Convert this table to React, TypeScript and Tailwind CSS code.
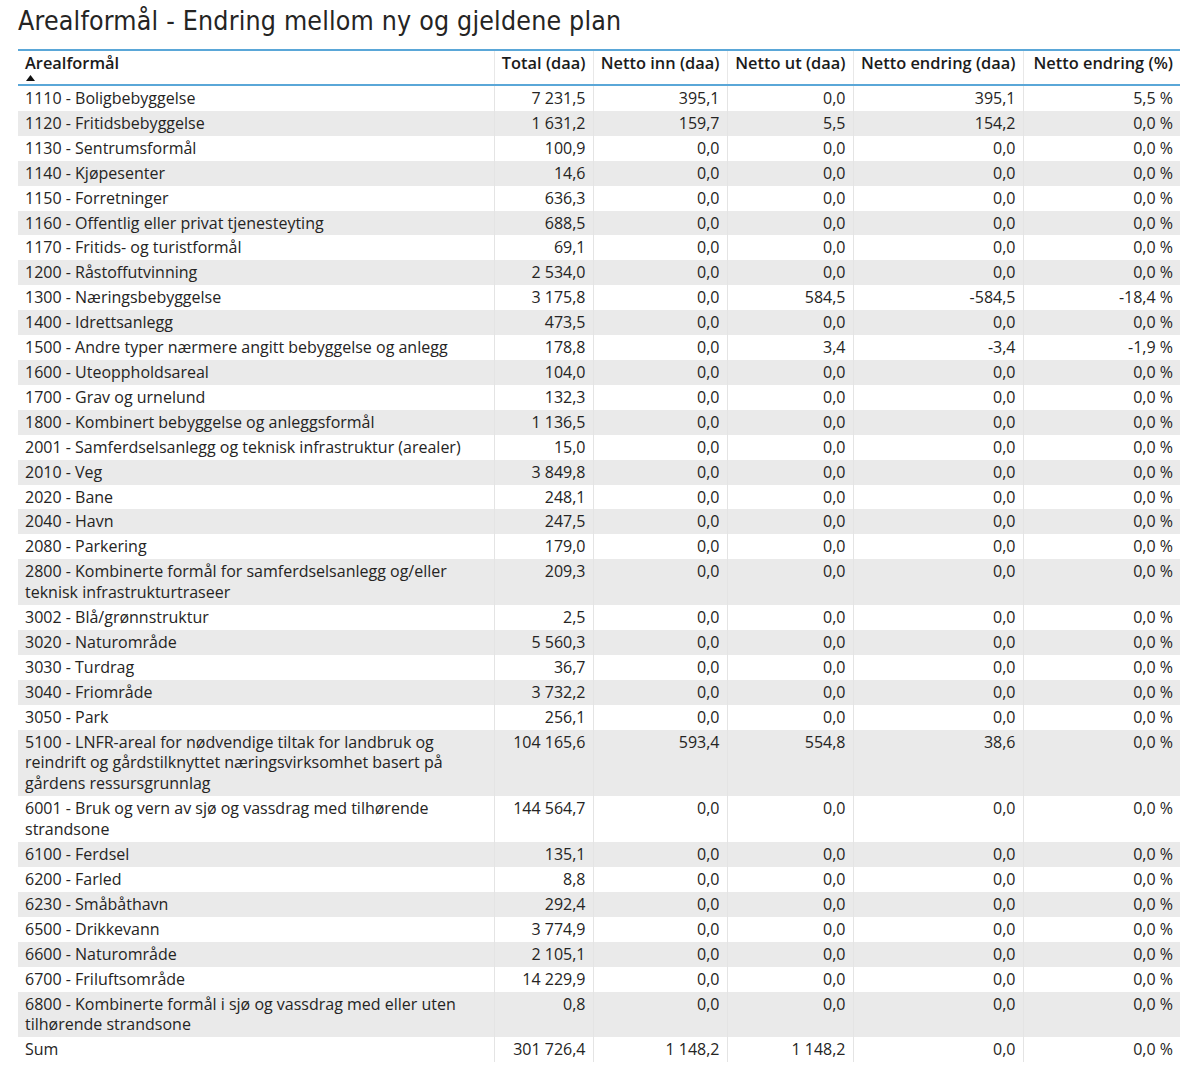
import React from 'react';

type Row = {
    name: string;
    total: string;
    inn: string;
    ut: string;
    endring: string;
    pct: string;
};

const rows: Row[] = [
    { name: '1110 - Boligbebyggelse', total: '7 231,5', inn: '395,1', ut: '0,0', endring: '395,1', pct: '5,5 %' },
    { name: '1120 - Fritidsbebyggelse', total: '1 631,2', inn: '159,7', ut: '5,5', endring: '154,2', pct: '0,0 %' },
    { name: '1130 - Sentrumsformål', total: '100,9', inn: '0,0', ut: '0,0', endring: '0,0', pct: '0,0 %' },
    { name: '1140 - Kjøpesenter', total: '14,6', inn: '0,0', ut: '0,0', endring: '0,0', pct: '0,0 %' },
    { name: '1150 - Forretninger', total: '636,3', inn: '0,0', ut: '0,0', endring: '0,0', pct: '0,0 %' },
    { name: '1160 - Offentlig eller privat tjenesteyting', total: '688,5', inn: '0,0', ut: '0,0', endring: '0,0', pct: '0,0 %' },
    { name: '1170 - Fritids- og turistformål', total: '69,1', inn: '0,0', ut: '0,0', endring: '0,0', pct: '0,0 %' },
    { name: '1200 - Råstoffutvinning', total: '2 534,0', inn: '0,0', ut: '0,0', endring: '0,0', pct: '0,0 %' },
    { name: '1300 - Næringsbebyggelse', total: '3 175,8', inn: '0,0', ut: '584,5', endring: '-584,5', pct: '-18,4 %' },
    { name: '1400 - Idrettsanlegg', total: '473,5', inn: '0,0', ut: '0,0', endring: '0,0', pct: '0,0 %' },
    { name: '1500 - Andre typer nærmere angitt bebyggelse og anlegg', total: '178,8', inn: '0,0', ut: '3,4', endring: '-3,4', pct: '-1,9 %' },
    { name: '1600 - Uteoppholdsareal', total: '104,0', inn: '0,0', ut: '0,0', endring: '0,0', pct: '0,0 %' },
    { name: '1700 - Grav og urnelund', total: '132,3', inn: '0,0', ut: '0,0', endring: '0,0', pct: '0,0 %' },
    { name: '1800 - Kombinert bebyggelse og anleggsformål', total: '1 136,5', inn: '0,0', ut: '0,0', endring: '0,0', pct: '0,0 %' },
    { name: '2001 - Samferdselsanlegg og teknisk infrastruktur (arealer)', total: '15,0', inn: '0,0', ut: '0,0', endring: '0,0', pct: '0,0 %' },
    { name: '2010 - Veg', total: '3 849,8', inn: '0,0', ut: '0,0', endring: '0,0', pct: '0,0 %' },
    { name: '2020 - Bane', total: '248,1', inn: '0,0', ut: '0,0', endring: '0,0', pct: '0,0 %' },
    { name: '2040 - Havn', total: '247,5', inn: '0,0', ut: '0,0', endring: '0,0', pct: '0,0 %' },
    { name: '2080 - Parkering', total: '179,0', inn: '0,0', ut: '0,0', endring: '0,0', pct: '0,0 %' },
    { name: '2800 - Kombinerte formål for samferdselsanlegg og/eller teknisk infrastrukturtraseer', total: '209,3', inn: '0,0', ut: '0,0', endring: '0,0', pct: '0,0 %' },
    { name: '3002 - Blå/grønnstruktur', total: '2,5', inn: '0,0', ut: '0,0', endring: '0,0', pct: '0,0 %' },
    { name: '3020 - Naturområde', total: '5 560,3', inn: '0,0', ut: '0,0', endring: '0,0', pct: '0,0 %' },
    { name: '3030 - Turdrag', total: '36,7', inn: '0,0', ut: '0,0', endring: '0,0', pct: '0,0 %' },
    { name: '3040 - Friområde', total: '3 732,2', inn: '0,0', ut: '0,0', endring: '0,0', pct: '0,0 %' },
    { name: '3050 - Park', total: '256,1', inn: '0,0', ut: '0,0', endring: '0,0', pct: '0,0 %' },
    { name: '5100 - LNFR-areal for nødvendige tiltak for landbruk og reindrift og gårdstilknyttet næringsvirksomhet basert på gårdens ressursgrunnlag', total: '104 165,6', inn: '593,4', ut: '554,8', endring: '38,6', pct: '0,0 %' },
    { name: '6001 - Bruk og vern av sjø og vassdrag med tilhørende strandsone', total: '144 564,7', inn: '0,0', ut: '0,0', endring: '0,0', pct: '0,0 %' },
    { name: '6100 - Ferdsel', total: '135,1', inn: '0,0', ut: '0,0', endring: '0,0', pct: '0,0 %' },
    { name: '6200 - Farled', total: '8,8', inn: '0,0', ut: '0,0', endring: '0,0', pct: '0,0 %' },
    { name: '6230 - Småbåthavn', total: '292,4', inn: '0,0', ut: '0,0', endring: '0,0', pct: '0,0 %' },
    { name: '6500 - Drikkevann', total: '3 774,9', inn: '0,0', ut: '0,0', endring: '0,0', pct: '0,0 %' },
    { name: '6600 - Naturområde', total: '2 105,1', inn: '0,0', ut: '0,0', endring: '0,0', pct: '0,0 %' },
    { name: '6700 - Friluftsområde', total: '14 229,9', inn: '0,0', ut: '0,0', endring: '0,0', pct: '0,0 %' },
    { name: '6800 - Kombinerte formål i sjø og vassdrag med eller uten tilhørende strandsone', total: '0,8', inn: '0,0', ut: '0,0', endring: '0,0', pct: '0,0 %' },
];

const sum: Row = { name: 'Sum', total: '301 726,4', inn: '1 148,2', ut: '1 148,2', endring: '0,0', pct: '0,0 %' };

const headers = ['Total (daa)', 'Netto inn (daa)', 'Netto ut (daa)', 'Netto endring (daa)', 'Netto endring (%)'];

function BodyRow({ row, striped }: { row: Row; striped: boolean }) {
    const cell = 'align-top py-[2px] px-[7px] leading-[20.9px] border-r border-[#e4e4e4]';
    return (
        <tr className={striped ? 'bg-[#eaeaea]' : 'bg-white'}>
            <td className={`${cell} text-left`}>{row.name}</td>
            <td className={`${cell} text-right`}>{row.total}</td>
            <td className={`${cell} text-right`}>{row.inn}</td>
            <td className={`${cell} text-right`}>{row.ut}</td>
            <td className={`${cell} text-right`}>{row.endring}</td>
            <td className="align-top py-[2px] px-[7px] leading-[20.9px] text-right">{row.pct}</td>
        </tr>
    );
}

export default function App() {
    return (
        <div className="w-[1200px] h-[1074px] bg-white overflow-hidden pl-[18px] pr-[20px]">
            <h1
                className="text-[26.5px] leading-[40px] text-[#252423] pt-[1px] tracking-[0.2px]"
                style={{ fontFamily: '"DejaVu Sans Condensed", "Roboto", sans-serif' }}
            >
                Arealformål - Endring mellom ny og gjeldene plan
            </h1>
            <table
                className="mt-[8px] w-[1162px] table-fixed border-collapse text-[16px] text-[#252423]"
                style={{ fontFamily: '"Open Sans", "Noto Sans", sans-serif' }}
            >
                <colgroup>
                    <col className="w-[476px]" />
                    <col className="w-[99px]" />
                    <col className="w-[134px]" />
                    <col className="w-[126px]" />
                    <col className="w-[170px]" />
                    <col className="w-[157px]" />
                </colgroup>
                <thead>
                    <tr className="border-t-2 border-b-2 border-[#5aa7d8] h-[35px] text-[16.4px]">
                        <th className="align-top text-left px-[7px] pt-[1px] font-semibold text-[#1b1b1b] border-r border-[#e8e8e8]">
                            <div className="leading-[21px]">Arealformål</div>
                            <svg width="9" height="6" viewBox="0 0 9 6" className="mt-[2px] ml-[1px]">
                                <polygon points="0,6 4.5,0 9,6" fill="#111" />
                            </svg>
                        </th>
                        {headers.map((h, i) => (
                            <th
                                key={h}
                                className={`align-top text-right pl-[4px] pr-[7px] pt-[1px] leading-[21px] font-semibold text-[#1b1b1b] whitespace-nowrap ${
                                    i < headers.length - 1 ? 'border-r border-[#e8e8e8]' : ''
                                }`}
                            >
                                {h}
                            </th>
                        ))}
                    </tr>
                </thead>
                <tbody>
                    {rows.map((r, i) => (
                        <BodyRow key={r.name} row={r} striped={i % 2 === 1} />
                    ))}
                    <BodyRow row={sum} striped={false} />
                </tbody>
            </table>
        </div>
    );
}
